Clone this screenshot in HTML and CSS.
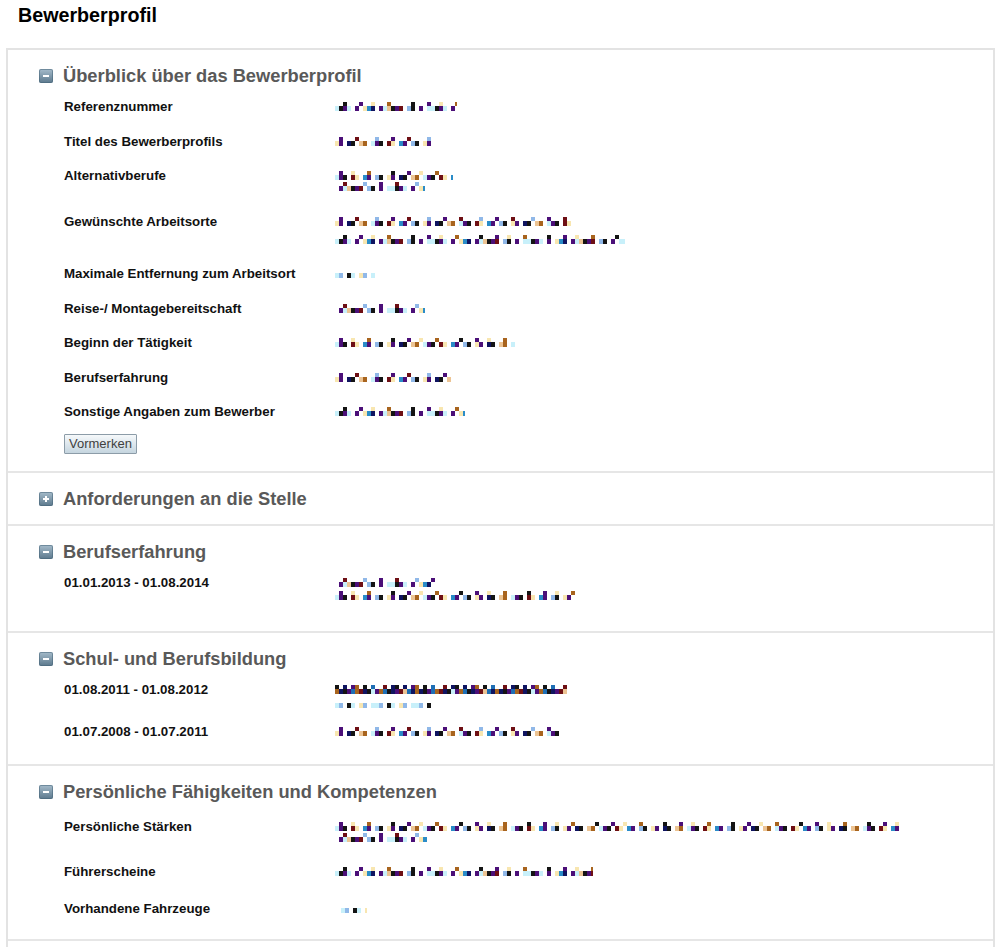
FILE: index.html
```html
<!DOCTYPE html>
<html lang="de">
<head>
<meta charset="utf-8">
<title>Bewerberprofil</title>
<link rel="stylesheet" href="styles.css">
</head>
<body>
<h1 class="page-title">Bewerberprofil</h1>
<div class="profile">
  <section class="sec sec-first">
    <h2 class="sec-head"><span class="tg"></span>Überblick über das Bewerberprofil</h2>
    <div class="fields">
      <div class="row"><div class="lbl">Referenznummer</div><div class="val"><div class="bar" style="width:122px"></div></div></div>
      <div class="row"><div class="lbl">Titel des Bewerberprofils</div><div class="val"><div class="bar v2" style="width:100px"></div></div></div>
      <div class="row"><div class="lbl">Alternativberufe</div><div class="val"><div class="bar v3" style="width:118px"></div><div class="bar v4" style="width:90px"></div></div></div>
      <div class="row"><div class="lbl">Gewünschte Arbeitsorte</div><div class="val"><div class="bar v2" style="width:236px"></div><div class="bar sp4" style="width:290px"></div></div></div>
      <div class="row"><div class="lbl">Maximale Entfernung zum Arbeitsort</div><div class="val"><div class="bar light" style="width:40px"></div></div></div>
      <div class="row"><div class="lbl">Reise-/ Montagebereitschaft</div><div class="val"><div class="bar v4" style="width:90px"></div></div></div>
      <div class="row"><div class="lbl">Beginn der Tätigkeit</div><div class="val"><div class="bar v3" style="width:180px"></div></div></div>
      <div class="row"><div class="lbl">Berufserfahrung</div><div class="val"><div class="bar v2" style="width:116px"></div></div></div>
      <div class="row"><div class="lbl">Sonstige Angaben zum Bewerber</div><div class="val"><div class="bar" style="width:130px"></div></div></div>
    </div>
    <button class="btn" type="button">Vormerken</button>
  </section>

  <section class="sec sec-closed">
    <h2 class="sec-head"><span class="tg plus"></span>Anforderungen an die Stelle</h2>
  </section>

  <section class="sec">
    <h2 class="sec-head"><span class="tg"></span>Berufserfahrung</h2>
    <div class="fields fields-work">
      <div class="row"><div class="lbl">01.01.2013 - 01.08.2014</div><div class="val"><div class="bar v4" style="width:100px"></div><div class="bar v3 sp2" style="width:240px"></div></div></div>
    </div>
  </section>

  <section class="sec">
    <h2 class="sec-head"><span class="tg"></span>Schul- und Berufsbildung</h2>
    <div class="fields fields-tight">
      <div class="row"><div class="lbl">01.08.2011 - 01.08.2012</div><div class="val"><div class="bar dense" style="width:232px"></div><div class="bar light sp3" style="width:96px"></div></div></div>
      <div class="row"><div class="lbl">01.07.2008 - 01.07.2011</div><div class="val"><div class="bar v2" style="width:228px"></div></div></div>
    </div>
  </section>

  <section class="sec">
    <h2 class="sec-head"><span class="tg"></span>Persönliche Fähigkeiten und Kompetenzen</h2>
    <div class="fields fields-low">
      <div class="row"><div class="lbl">Persönliche Stärken</div><div class="val"><div class="bar v3" style="width:564px"></div><div class="bar v4 sp1" style="width:92px"></div></div></div>
      <div class="row"><div class="lbl">Führerscheine</div><div class="val"><div class="bar" style="width:258px"></div></div></div>
      <div class="row row-gap2"><div class="lbl">Vorhandene Fahrzeuge</div><div class="val"><div class="bar light tiny" style="width:26px"></div></div></div>
    </div>
  </section>
</div>
</body>
</html>
```
FILE: styles.css
```css
:root {
  --b1: linear-gradient(90deg, #c8f0fa 0 4px, #141414 4px 8px, #4b0f78 8px 12px, #c8f0fa 12px 16px, transparent 16px 20px, #4b0f78 20px 24px, transparent 24px 28px, #f8e6b0 28px 32px, #2a8cc8 32px 36px, #0f1460 36px 40px, transparent 40px 44px, #4b0f78 44px 48px, #c8f0fa 48px 52px, #ecc494 52px 56px, #141414 56px 60px, #4b0f78 60px 64px, #6e0f14 64px 68px, transparent 68px 72px, #90b8e8 72px 76px, #141414 76px 80px, transparent 80px 84px, #4b0f78 84px 88px, transparent 88px 92px, #c8f0fa 92px 96px);
  --t1: linear-gradient(90deg, transparent 0 8px, #141414 8px 12px, transparent 12px 24px, #4b0f78 24px 28px, transparent 28px 36px, #f8e6b0 36px 40px, transparent 40px 52px, #a8641e 52px 56px, transparent 56px 68px);
  --b2: linear-gradient(90deg, #f8e6b0 0 4px, #4b0f78 4px 8px, transparent 8px 12px, #0f1460 12px 16px, #141414 16px 20px, transparent 20px 24px, #ecc494 24px 28px, #a8641e 28px 32px, transparent 32px 36px, #c8f0fa 36px 40px, #4b0f78 40px 44px, #141414 44px 48px, transparent 48px 52px, #6e0f14 52px 56px, #f8e6b0 56px 60px, transparent 60px 64px, #2a8cc8 64px 68px, #4b0f78 68px 72px, transparent 72px 76px, #90b8e8 76px 80px, #141414 80px 84px, transparent 84px 88px);
  --t2: linear-gradient(90deg, transparent 0 4px, #4b0f78 4px 8px, transparent 8px 20px, #6e0f14 20px 24px, transparent 24px 40px, #90b8e8 40px 44px, transparent 44px 52px);
  --b3: linear-gradient(90deg, #a8641e 0 4px, #0f1460 4px 8px, #141414 8px 12px, #4b0f78 12px 16px, #1e6eb4 16px 20px, #a8641e 20px 24px, #6e0f14 24px 28px, #0f1460 28px 32px, #141414 32px 36px, #c8f0fa 36px 40px, #4b0f78 40px 44px, #a8641e 44px 48px, #1e6eb4 48px 52px, #141414 52px 56px, #0f1460 56px 60px, #4b0f78 60px 64px, #6e0f14 64px 68px, #ecc494 68px 72px, #1e6eb4 72px 76px, #0f1460 76px 80px);
  --t3: linear-gradient(90deg, #141414 0 4px, transparent 4px 8px, #0f1460 8px 12px, transparent 12px 16px, #4b0f78 16px 20px, #a8641e 20px 24px, transparent 24px 28px, #141414 28px 32px, transparent 32px 36px, #1e6eb4 36px 40px, transparent 40px 48px, #6e0f14 48px 52px, transparent 52px 56px, #0f1460 56px 60px);
  --b4: linear-gradient(90deg, #c8f0fa 0 4px, #90b8e8 4px 8px, transparent 8px 12px, #141414 12px 16px, #c8f0fa 16px 20px, transparent 20px 24px, #f8e6b0 24px 28px, #90b8e8 28px 32px, transparent 32px 36px, #c8f0fa 36px 40px);
}

html, body {
  background: #ffffff;
}

body {
  margin: 0;
  font-family: "Liberation Sans", Arial, sans-serif;
  color: #111111;
}

.page-title {
  margin: 0 0 21px;
  padding: 3px 0 0 18px;
  font-size: 19.7px;
  line-height: 24px;
  font-weight: bold;
  color: #000000;
}

.profile {
  margin-left: 6px;
  width: 989px;
  box-sizing: border-box;
  border: 2px solid #e3e3e3;
  border-bottom: none;
  padding-bottom: 40px;
}

.sec {
  padding: 15px 0 14px 31px;
  border-bottom: 2px solid #e6e6e6;
}

.sec-head {
  display: flex;
  align-items: center;
  gap: 10px;
  margin: 0 0 13px;
  font-size: 18.3px;
  line-height: 22px;
  font-weight: bold;
  color: #595959;
}

.sec-closed .sec-head {
  margin-bottom: 0;
}

.tg {
  position: relative;
  flex: none;
  width: 14px;
  height: 14px;
  box-sizing: border-box;
  border-radius: 2px;
  background: linear-gradient(#a6bccb, #5b788c);
  box-shadow: inset 0 0 0 1px rgba(70, 100, 120, 0.55);
}

.tg::before {
  content: "";
  position: absolute;
  left: 4px;
  top: 6px;
  width: 6px;
  height: 2px;
  background: #ffffff;
}

.tg.plus::after {
  content: "";
  position: absolute;
  left: 6px;
  top: 4px;
  width: 2px;
  height: 6px;
  background: #ffffff;
}

.fields {
  display: flex;
  flex-direction: column;
  gap: 21.5px;
  margin-left: 25px;
  padding-bottom: 13px;
}

.fields-work {
  padding-bottom: 15px;
}

.fields-tight {
  gap: 15.5px;
  padding-bottom: 12px;
}

.fields-low {
  padding-top: 4px;
  gap: 21px;
  padding-bottom: 10px;
}

.fields-low .row-gap2 {
  margin-top: 3px;
}

.sec-first .fields {
  padding-bottom: 0;
}

.row {
  display: grid;
  grid-template-columns: 271px 1fr;
  font-size: 13.3px;
  line-height: 13px;
  font-weight: bold;
  color: #111111;
}

.lbl {
  white-space: nowrap;
}

.bar {
  height: 9px;
  margin: 2px 0;
  background: var(--t1) 0 0 / 68px 4px repeat-x, var(--b1) 0 4px / 96px 5px repeat-x;
}

.bar.v2 {
  background: var(--t2) 0 0 / 52px 4px repeat-x, var(--b2) 0 4px / 88px 5px repeat-x;
}

.bar.v3 {
  background: var(--t1) -20px 0 / 68px 4px repeat-x, var(--b2) -36px 4px / 88px 5px repeat-x;
}

.bar.v4 {
  background: var(--t2) -12px 0 / 52px 4px repeat-x, var(--b1) -40px 4px / 96px 5px repeat-x;
}

.bar.dense {
  background: var(--t3) 0 0 / 60px 4px repeat-x, var(--b3) 0 4px / 80px 5px repeat-x;
}

.bar.light {
  background: var(--b4) 0 4px / 40px 5px repeat-x;
}

.bar.tiny {
  margin-left: 6px;
}

.bar.sp1 { margin-top: 2px; }
.bar.sp2 { margin-top: 4px; }
.bar.sp3 { margin-top: 5px; }
.bar.sp4 { margin-top: 9px; }

.btn {
  display: block;
  margin: 15.5px 0 3px 25px;
  padding: 1px 4px;
  height: 20px;
  box-sizing: border-box;
  font-family: "Liberation Sans", Arial, sans-serif;
  font-size: 13px;
  line-height: 16px;
  color: #404040;
  background: linear-gradient(#f6f9fb, #c5d5df);
  border: 1px solid #8c9ca8;
  border-radius: 1px;
  cursor: pointer;
}
```
